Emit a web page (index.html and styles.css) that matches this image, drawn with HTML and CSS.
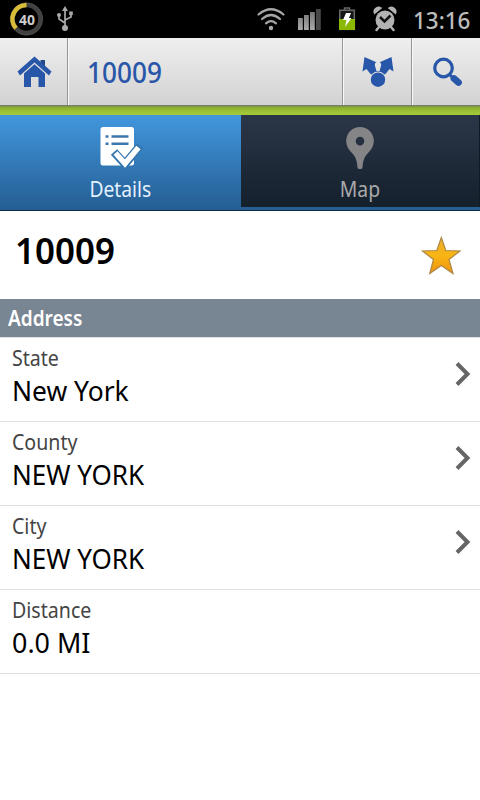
FILE: index.html
```html
<!DOCTYPE html>
<html lang="en">
<head>
<meta charset="utf-8">
<title>10009</title>
<link rel="stylesheet" href="styles.css">
</head>
<body>
<div class="status">
  <svg width="480" height="38" viewBox="0 0 480 38" class="status-icons">
    <defs><linearGradient id="sig" x2="0" y2="1"><stop stop-color="#777"/><stop offset="1" stop-color="#aaa"/></linearGradient></defs>
    <circle cx="26.500" cy="19" r="14" fill="none" stroke="#414141" stroke-width="4.500"/>
    <circle cx="26.500" cy="19" r="16.200" fill="none" stroke="#555" stroke-width=".7"/>
    <path d="M26.500 5A14 14 0 0 0 16 28.300" fill="none" stroke="#d9bd38" stroke-width="4.500"/>
    <text x="19" y="24.500" class="level" textLength="16" lengthAdjust="spacingAndGlyphs">40</text>
    <g fill="none" stroke="#aaa" stroke-width="1.700"><path d="M65 28V9M65 23l-6-4v-4M65 20l6-3v-3"/></g>
    <g fill="#aaa"><path d="M65 6l3 5h-6z"/><circle cx="65" cy="28" r="3"/><circle cx="59" cy="15" r="2"/><path d="M69.200 11.500h3.600v3.600h-3.600z"/></g>
    <g fill="none" stroke="#a5a5a5" stroke-width="2.200" stroke-linecap="round"><path d="M258.500 14.500Q271 4 283.500 14.500M262 19Q271 11 280 19M266 23.300Q271 19 276 23.300"/></g>
    <circle cx="271" cy="28" r="2.200" fill="#aaa"/>
    <path d="M298 18h4.800v12H298zM304 15h4.800v15H304zM310 12h4.800v18H310z" fill="url(#sig)"/><path d="M316 9h4.800v21H316z" fill="#484848"/>
    <path d="M344.500 10V8h5v2" fill="none" stroke="#666" stroke-width="1.500"/><rect x="339.800" y="10.300" width="14.500" height="19" fill="#151515" stroke="#666" stroke-width="1.600"/>
    <path d="M339 19h16v11h-16z" fill="#8bb800"/><path d="M346 13h5l-2 5h2.500l-6.500 9 1.500-7H343z" fill="#fff"/>
    <g fill="#b2b2b2"><circle cx="385" cy="20" r="9.500"/><path d="M374.300 14.500a5.200 5.200 0 0 1 8-6.500zM395.700 14.500a5.200 5.200 0 0 0-8-6.500z"/></g>
    <path d="M379 27l-2.500 3M391 27l2.500 3" stroke="#b2b2b2" stroke-width="2.500" stroke-linecap="round"/><path d="M380 17l4.500 4.500 6-6" fill="none" stroke="#111" stroke-width="2.500"/>
  </svg>
  <span class="clock t">13:16</span>
</div>
<header class="bar">
  <div class="cell home">
    <svg width="68" height="67" viewBox="0 38 68 67"><path d="M40.500 60H45v9l-4.500-4z" fill="#244889"/><path d="M17.500 71.500L34.500 56.500 51.500 71.500 49 75.500 34.500 62.500 20 75.500z" fill="#2856a8"/><path d="M24 73.500L34.500 64.200 45 73.500V87h-6.500V77h-7.500V87H24z" fill="#2856a8"/></svg>
  </div>
  <div class="cell heading"><span class="t">10009</span></div>
  <div class="cell share">
    <svg width="69" height="67" viewBox="343 38 69 67" fill="#2856a8"><path d="M364.500 57L378 63 391.500 57 393.500 71.500 389.500 69 385.500 74 378 77 370.500 74 366.500 69 362.500 71.500z"/><path d="M376.500 71l-1.500-5a3.200 3.200 0 1 1 6 0l-1.500 5z" fill="#e5e5e5"/><circle cx="378" cy="79.500" r="8" fill="#e1e1e1"/><circle cx="378" cy="79.700" r="7.200"/></svg>
  </div>
  <div class="cell search">
    <svg width="68" height="67" viewBox="412 38 68 67" fill="none" stroke="#2856a8"><circle cx="443.500" cy="68" r="8.800" stroke-width="3.200"/><path d="M449.500 74.500l3 3" stroke-width="3"/><path d="M454 78.500l4.500 4" stroke-width="6.800" stroke-linecap="round"/></svg>
  </div>
</header>
<div class="green"></div>
<nav class="tabs">
  <div class="tab active">
    <svg width="44" height="44" viewBox="98.500 125 44 44"><rect x="100" y="127" width="33.500" height="38.500" rx="2.500" fill="#fff"/><path d="M105 136.500h3M111 136.500h17M105 143.700h3M111 143.700h17" stroke="#3c78ae" stroke-width="2.600"/><path d="M113.500 152l11 12 15-18" fill="none" stroke="#3475b0" stroke-width="8.500"/><path d="M115 153l9.500 10.500 13.500-16" fill="none" stroke="#fff" stroke-width="5.500"/></svg>
    <span class="t details">Details</span>
  </div>
  <div class="tab map-tab">
    <svg width="44" height="44" viewBox="338 125 44 44"><path fill-rule="evenodd" d="M360 127a13.800 13.800 0 0 0-13.800 13.800c0 5 2 8.500 5.500 12 4 4 5.300 8 5.700 14 .1 2 .8 2.200 2.600 2.200s2.500-.2 2.600-2.200c.4-6 1.700-10 5.700-14 3.500-3.500 5.500-7 5.500-12A13.800 13.800 0 0 0 360 127zm0 9.800a4.300 4.300 0 1 1 0 8.600 4.300 4.300 0 0 1 0-8.600z" fill="#858587"/></svg>
    <span class="t map">Map</span>
  </div>
</nav>
<section class="title">
  <h1 class="t">10009</h1>
  <svg width="42" height="42" viewBox="420 235 42 42"><defs><linearGradient id="star" x2="0" y2="1"><stop stop-color="#e8ad2f"/><stop offset=".5" stop-color="#f9b514"/><stop offset="1" stop-color="#ed920c"/></linearGradient></defs><path d="M441.300 237.500L445.800 250.500 460 251 449 259.500 453 273.500 441.300 265.500 429.700 273.500 433.500 259.500 422.500 251 436.800 250.500z" fill="url(#star)" stroke="#ad8746" stroke-width="1.200"/></svg>
</section>
<h2 class="section"><span class="t">Address</span></h2>
<main>
  <div class="row"><div><div class="label"><span class="t">State</span></div><div class="value"><span class="t place">New York</span></div></div><svg class="chevron" width="16" height="26" viewBox="0 0 16 26"><path d="M2 2.500L12.500 13 2 23.500"/></svg></div>
  <div class="row"><div><div class="label"><span class="t">County</span></div><div class="value"><span class="t">NEW YORK</span></div></div><svg class="chevron" width="16" height="26" viewBox="0 0 16 26"><path d="M2 2.500L12.500 13 2 23.500"/></svg></div>
  <div class="row"><div><div class="label"><span class="t">City</span></div><div class="value"><span class="t">NEW YORK</span></div></div><svg class="chevron" width="16" height="26" viewBox="0 0 16 26"><path d="M2 2.500L12.500 13 2 23.500"/></svg></div>
  <div class="row"><div><div class="label"><span class="t">Distance</span></div><div class="value"><span class="t miles">0.0 MI</span></div></div></div>
</main>
</body>
</html>
```
FILE: styles.css
```css
* { box-sizing: border-box; }
body { margin: 0; width: 480px; height: 800px; overflow: hidden; background: #fff; color: #000; font-family: "Noto Sans", "Open Sans", sans-serif; }
svg { display: block; flex: none; }
.t { display: inline-block; white-space: nowrap; transform-origin: 0 50%; }
.status { height: 38px; background: #000; position: relative; display: flex; justify-content: flex-end; }
.status-icons { position: absolute; left: 0; top: 0; }
.level { font: bold 14px "Noto Sans", sans-serif; fill: #ccc; }
.clock { width: 67px; font-size: 24px; line-height: 39px; font-weight: 500; color: #bdbdbd; transform: scaleX(.935); }
.bar { height: 67px; display: flex; background: linear-gradient(#efefef, #d2d2d2); }
.cell { border-right: 1px solid #969696; border-left: 1px solid #f8f8f8; overflow: hidden; }
.home { width: 68px; border-left: 0; }
.heading { width: 275px; padding-left: 18px; color: #2856a8; font-size: 28px; line-height: 68px; font-weight: 500; }
.heading .t { transform: scaleX(.935); }
.share { width: 69px; }
.search { width: 68px; border-right: 0; }
.share svg, .search svg { margin-left: -1px; }
.green { height: 10px; background: linear-gradient(#777f66 0 1px, #8aab2d 2px, #9dc534 7px, #a2ca3c); }
.tabs { height: 96px; display: flex; background: #265f94; border-bottom: 1px solid #122b42; }
.tab { display: flex; flex-direction: column; align-items: center; padding-top: 10px; font-size: 22px; }
.tab .t { line-height: 30px; margin-top: 4px; transform-origin: 50% 50%; }
.active { width: 241px; background: linear-gradient(#4297dd, #245d92); color: #e4f1ff; }
.map-tab { width: 239px; height: 92px; background: linear-gradient(#2b3648, #14202c); color: #aaa; border-right: 1px solid #111a24; }
.details { transform: scaleX(.875); }
.map { transform: scaleX(.88); }
.title { height: 88px; display: flex; justify-content: space-between; padding: 0 18px 0 15px; }
.title h1 { margin: 15px 0 0; font-size: 36px; line-height: 50px; font-weight: 600; transform: scaleX(.97); }
.title svg { margin-top: 24px; }
.section { margin: 0; height: 39px; padding-left: 8px; background: #788592; border-bottom: 1px solid #dfe1e3; color: #fff; font-size: 22px; line-height: 37px; font-weight: 600; }
.section .t { transform: scaleX(.865); }
.row { height: 84px; padding: 6px 9px 0 12px; border-bottom: 1px solid #e0e0e0; display: flex; justify-content: space-between; }
.label { height: 26px; line-height: 26px; font-size: 22px; color: #444; }
.value { margin-top: 3px; height: 34px; line-height: 34px; font-size: 28px; }
.label .t { transform: scaleX(.89); }
.value .t { transform: scaleX(.93); }
.value .place { transform: scaleX(.943); }
.value .miles { transform: scaleX(.96); }
.chevron { margin-top: 17px; fill: none; stroke: #666; stroke-width: 4; }
```
